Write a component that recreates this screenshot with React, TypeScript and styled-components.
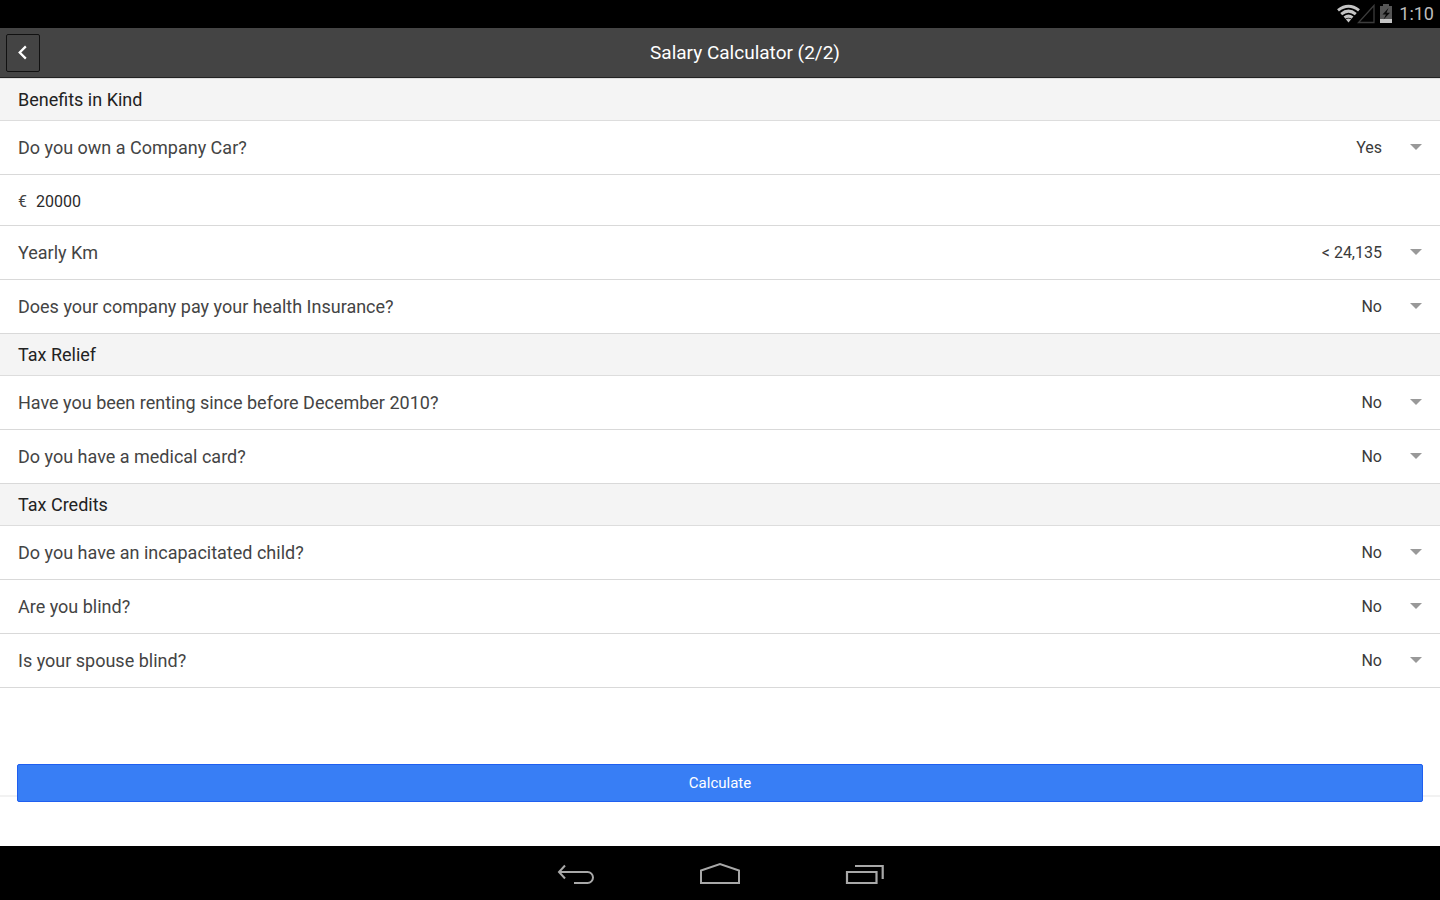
import React, { useState } from "react";
import styled, { createGlobalStyle } from "styled-components";

const GlobalStyle = createGlobalStyle`
  *, *::before, *::after { box-sizing: border-box; }
  body {
    margin: 0;
    background: #fff;
    color: #333;
    font-family: Roboto, "Liberation Sans", sans-serif;
  }
  button, input, select { font-family: inherit; }
`;

const Screen = styled.div`
  display: flex;
  flex-direction: column;
  min-height: 100vh;
`;

const StatusBar = styled.div`
  display: flex;
  align-items: center;
  justify-content: flex-end;
  height: 28px;
  padding-right: 6px;
  background: #000;
  color: #bdbdbd;
`;

const Clock = styled.time`
  margin-left: 6px;
  font-size: 18px;
  line-height: 28px;
`;

const Header = styled.header`
  display: flex;
  align-items: center;
  height: 50px;
  padding-left: 6px;
  background: #444;
  border-bottom: 1px solid #222;
`;

const BackButton = styled.button`
  display: flex;
  align-items: center;
  justify-content: center;
  width: 34px;
  height: 38px;
  margin-right: 10px;
  padding: 0;
  border: 1px solid #111;
  border-radius: 2px;
  background: transparent;
  color: #fff;
`;

const Title = styled.h1`
  flex: 1;
  margin: 0;
  text-align: center;
  font-size: 19px;
  line-height: 48px;
  font-weight: 400;
  color: #fff;
`;

const Content = styled.form`
  flex: 1;
  padding-top: 1px;
  background: linear-gradient(#ddd 1px, #fff 1px);
`;

const SectionTitle = styled.h2`
  margin: 0;
  padding: 0 18px;
  background: #f4f4f4;
  border-bottom: 1px solid #ddd;
  color: #222;
  font-size: 18px;
  line-height: 41px;
  font-weight: 400;
`;

const Row = styled.div`
  position: relative;
  display: flex;
  align-items: center;
  height: 54px;
  padding-left: 18px;
  border-bottom: 1px solid #d9d9d9;
`;

const RowLabel = styled.label`
  font-size: 18px;
  line-height: 24px;
  color: #444;
`;

const Select = styled.select`
  flex: 1;
  height: 53px;
  padding: 0 58px 0 16px;
  border: 0;
  background: transparent;
  appearance: none;
  color: #3a3a3a;
  font-size: 16px;
  text-align-last: right;
`;

const Arrow = styled.span`
  position: absolute;
  right: 18px;
  top: 23px;
  border: solid transparent;
  border-width: 6px 6px 0;
  border-top-color: #999;
  pointer-events: none;
`;

const AmountRow = styled(Row)`
  height: 51px;
  padding-top: 3px;
`;

const Currency = styled.label`
  width: 18px;
  font-size: 16px;
  color: #444;
`;

const AmountInput = styled.input`
  flex: 1;
  height: 40px;
  padding: 0;
  border: 0;
  background: transparent;
  color: #2a2a2a;
  font-size: 16px;
`;

const Actions = styled.div`
  display: flex;
  padding: 76px 17px 0;
  border-bottom: 2px solid #f2f2f2;
`;

const CalculateButton = styled.button`
  flex: 1;
  height: 38px;
  margin-bottom: -7px;
  border: 1px solid #1f5ff0;
  border-radius: 2px;
  background: #387ef5;
  color: #fff;
  font-size: 15px;
`;

const NavBar = styled.nav`
  display: flex;
  justify-content: center;
  height: 54px;
  background: #000;
`;

const NavButton = styled.button`
  display: flex;
  align-items: center;
  justify-content: center;
  width: 144px;
  padding: 0;
  border: 0;
  background: transparent;
  color: #a8a8a8;
`;

const StatusIcons = () => (
  <svg width="56" height="24" viewBox="0 0 56 24" aria-hidden="true">
    <g fill="none" stroke="#c4c4c4" strokeWidth="3">
      <path d="M1 8.400Q11.500 .2 22 8.400" />
      <path d="M4.200 12.100Q11.500 6.100 18.800 12.100" />
      <path d="M7.500 15.700Q11.500 12.500 15.500 15.700" />
    </g>
    <path d="M8.800 17.300Q11.500 15.700 14.200 17.300L11.500 20.500Z" fill="#c4c4c4" />
    <path d="M37 3.500V20.500H21.500Z" fill="none" stroke="#3c3c3c" strokeWidth="1.300" />
    <path d="M43 4h3V2h6v2h3v17H43Z" fill="#555" />
    <path d="M43 17h12v4H43Z" fill="#c4c4c4" />
    <path d="M51.500 6L45.500 12.500H49L46.500 17.500L53 10.800H49.500Z" fill="#0a0a0a" />
  </svg>
);

const ChevronLeft = () => (
  <svg width="34" height="36" viewBox="0 0 34 36" aria-hidden="true">
    <path d="M20 11L13.500 17.500L20 24" fill="none" stroke="currentColor" strokeWidth="2.400" />
  </svg>
);

const BackIcon = () => (
  <svg width="40" height="24" viewBox="0 0 40 24" fill="none" stroke="currentColor" strokeWidth="2" aria-hidden="true">
    <path d="M9 4.500L3 11L9 17.500M3 11H31.500A5.300 5.300 0 0 1 31.500 22H18" />
  </svg>
);

const HomeIcon = () => (
  <svg width="42" height="24" viewBox="0 0 42 24" fill="none" stroke="currentColor" strokeWidth="2" aria-hidden="true">
    <path d="M2 22V9.500L21 3L40 9.500V22Z" />
  </svg>
);

const RecentIcon = () => (
  <svg width="40" height="24" viewBox="0 0 40 24" fill="none" stroke="currentColor" aria-hidden="true">
    <path d="M3 11H32.500V22H3Z" strokeWidth="2.200" />
    <path d="M11 5H38.700V18" strokeWidth="2.200" />
  </svg>
);

type Question = { id: string; label: string; value: string; options: string[] };

const yesNo = ["Yes", "No"];

const SelectRow = ({ id, label, value, options }: Question) => (
  <Row>
    <RowLabel htmlFor={id}>{label}</RowLabel>
    <Select id={id} defaultValue={value}>
      {options.map((option) => (
        <option key={option}>{option}</option>
      ))}
    </Select>
    <Arrow />
  </Row>
);

const reliefQuestions: Question[] = [
  { id: "renting", label: "Have you been renting since before December 2010?", value: "No", options: yesNo },
  { id: "medical", label: "Do you have a medical card?", value: "No", options: yesNo },
];

const creditQuestions: Question[] = [
  { id: "child", label: "Do you have an incapacitated child?", value: "No", options: yesNo },
  { id: "blind", label: "Are you blind?", value: "No", options: yesNo },
  { id: "spouse", label: "Is your spouse blind?", value: "No", options: yesNo },
];

export default function App() {
  const [carValue, setCarValue] = useState("20000");

  return (
    <Screen>
      <GlobalStyle />
      <StatusBar>
        <StatusIcons />
        <Clock>1:10</Clock>
      </StatusBar>
      <Header>
        <BackButton type="button" aria-label="Back">
          <ChevronLeft />
        </BackButton>
        <Title>Salary Calculator (2/2)</Title>
      </Header>
      <Content onSubmit={(event) => event.preventDefault()}>
        <SectionTitle>Benefits in Kind</SectionTitle>
        <SelectRow id="car" label="Do you own a Company Car?" value="Yes" options={yesNo} />
        <AmountRow>
          <Currency htmlFor="amount">€</Currency>
          <AmountInput id="amount" inputMode="numeric" value={carValue} onChange={(event) => setCarValue(event.target.value)} />
        </AmountRow>
        <SelectRow id="km" label="Yearly Km" value="< 24,135" options={["< 24,135", "> 24,135"]} />
        <SelectRow id="health" label="Does your company pay your health Insurance?" value="No" options={yesNo} />
        <SectionTitle>Tax Relief</SectionTitle>
        {reliefQuestions.map((question) => (
          <SelectRow key={question.id} {...question} />
        ))}
        <SectionTitle>Tax Credits</SectionTitle>
        {creditQuestions.map((question) => (
          <SelectRow key={question.id} {...question} />
        ))}
        <Actions>
          <CalculateButton type="submit">Calculate</CalculateButton>
        </Actions>
      </Content>
      <NavBar aria-label="System">
        <NavButton type="button" aria-label="Back">
          <BackIcon />
        </NavButton>
        <NavButton type="button" aria-label="Home">
          <HomeIcon />
        </NavButton>
        <NavButton type="button" aria-label="Recent apps">
          <RecentIcon />
        </NavButton>
      </NavBar>
    </Screen>
  );
}
